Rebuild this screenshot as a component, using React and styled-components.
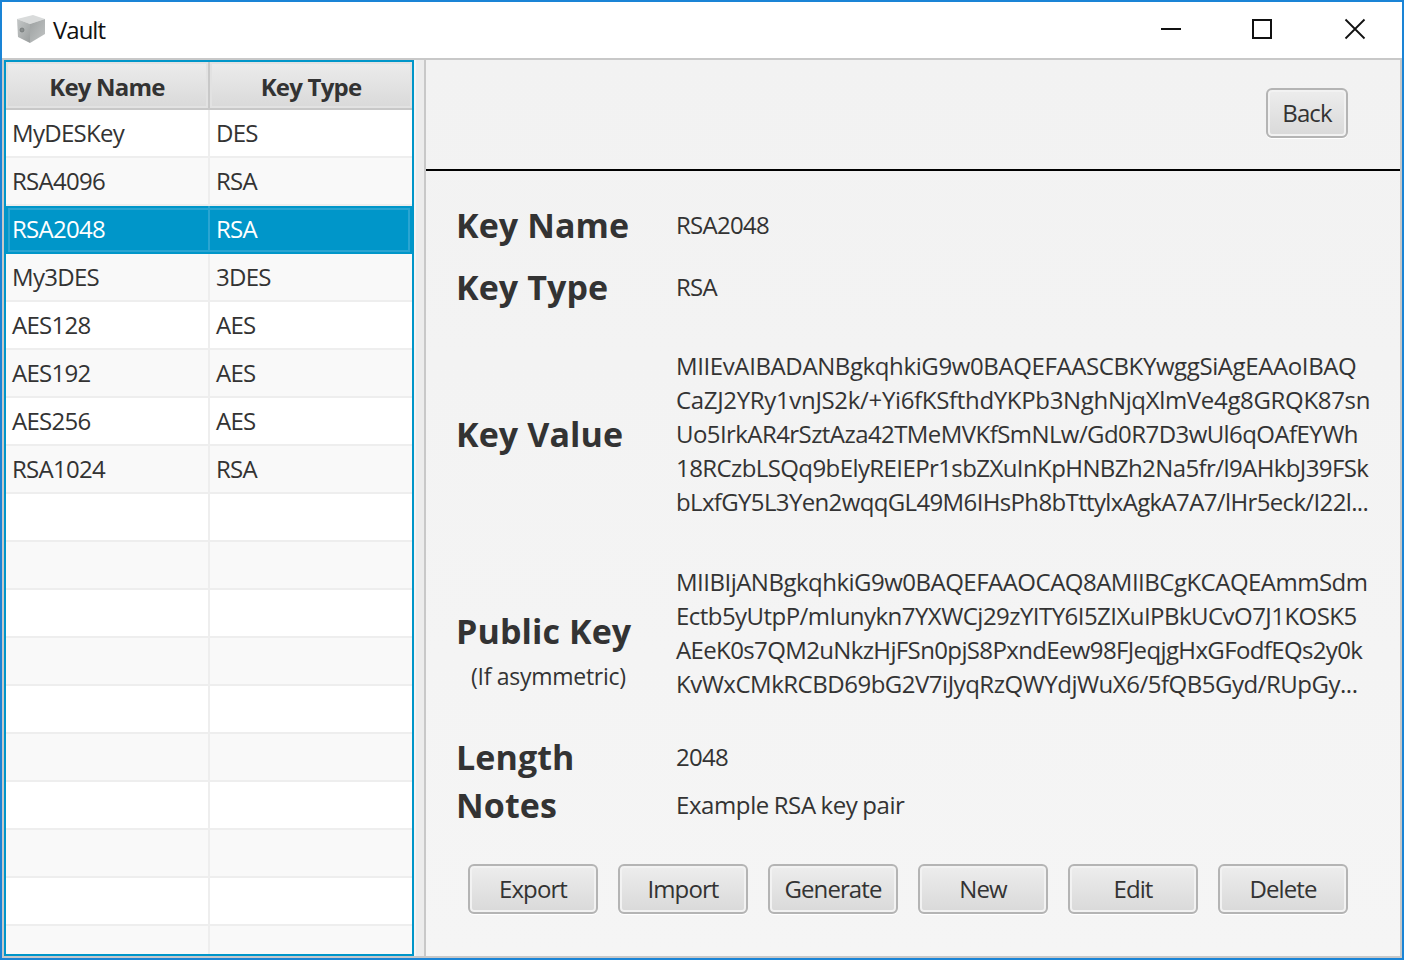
import React from 'react';
import styled, { createGlobalStyle } from 'styled-components';

const GlobalStyle = createGlobalStyle`
  html, body { margin: 0; padding: 0; background: #ffffff; }
  * { box-sizing: border-box; }
  body { font-family: 'Open Sans', 'Noto Sans', 'Liberation Sans', sans-serif; color: #333333; }
`;

const Window = styled.div`
  width: 1404px;
  height: 960px;
  display: flex;
  flex-direction: column;
  border: 2px solid #1a84d6;
  overflow: hidden;
`;

const TitleBar = styled.div`
  height: 56px;
  flex: none;
  display: flex;
  align-items: center;
  background: #ffffff;
  padding-left: 14px;
`;

const AppTitle = styled.span`
  margin-left: 7px;
  font-size: 24px;
  letter-spacing: -1px;
  color: #111111;
  padding-bottom: 1px;
`;

const WindowControls = styled.div`
  margin-left: auto;
  display: flex;
  height: 100%;
`;

const ControlButton = styled.div`
  width: ${(p) => p.$width}px;
  height: 100%;
  display: flex;
  align-items: center;
  justify-content: center;
  padding-bottom: 2px;
`;

const Body = styled.div`
  flex: 1;
  min-height: 0;
  display: flex;
  border: 2px solid #c8c8c8;
  background: #f4f4f4;
`;

const TablePane = styled.div`
  width: 410px;
  flex: none;
  border: 2px solid #0096c9;
  background: #ffffff;
  overflow: hidden;
`;

const HeaderRow = styled.div`
  height: 48px;
  display: grid;
  grid-template-columns: 204px 1fr;
  background: #c8c8c8;
  padding-bottom: 2px;
`;

const HeaderCell = styled.div`
  display: flex;
  align-items: center;
  justify-content: center;
  padding-top: 2px;
  font-size: 24px;
  font-weight: 700;
  letter-spacing: -0.8px;
  color: #333333;
  background: linear-gradient(180deg, #ececec, #d9d9d9);
  margin-right: ${(p) => (p.$divider ? '2px' : '0')};
  box-shadow: inset 0 0 0 2px #e2e2e2;
`;

const Row = styled.div`
  height: 48px;
  display: grid;
  grid-template-columns: 204px 1fr;
  background: ${(p) => (p.$selected ? '#0096c9' : p.$odd ? '#f9f9f9' : '#ffffff')};
  color: ${(p) => (p.$selected ? '#ffffff' : '#333333')};
  border-bottom: 2px solid ${(p) => (p.$selected ? '#0096c9' : '#eeeeee')};
  position: relative;

  ${(p) => p.$selected && `
    &::after {
      content: '';
      position: absolute;
      inset: 2px 2px 0;
      border: 2px solid #2aa5d2;
      pointer-events: none;
    }
  `}
`;

const Cell = styled.div`
  display: flex;
  align-items: center;
  padding: 0 0 2px 6px;
  font-size: 24px;
  letter-spacing: -0.7px;
  border-right: ${(p) => (p.$divider ? `2px solid ${p.$selected ? '#2aa5d2' : '#eeeeee'}` : '0')};
  white-space: nowrap;
  overflow: hidden;
`;

const Splitter = styled.div`
  width: 12px;
  flex: none;
  background: #ececec;
  border-left: 2px solid #f4f4f4;
  border-right: 2px solid #c8c8c8;
`;

const DetailPane = styled.div`
  flex: 1;
  min-width: 0;
  display: flex;
  flex-direction: column;
  background: linear-gradient(180deg, #f2f2f2, #f5f5f5);
`;

const TopBar = styled.div`
  height: 111px;
  flex: none;
  display: flex;
  justify-content: flex-end;
  padding: 28px 52px 0 0;
  border-bottom: 2px solid #000000;
`;

const Details = styled.div`
  padding: 24px 0 0 30px;
  display: flex;
  flex-direction: column;
`;

const Field = styled.div`
  display: grid;
  grid-template-columns: 220px 1fr;
  align-items: center;
  height: ${(p) => p.$height}px;
  margin-top: ${(p) => p.$gap || 0}px;
  padding-bottom: 2px;
`;

const LabelBlock = styled.div`
  display: flex;
  flex-direction: column;
  padding-top: 34px;
`;

const Label = styled.div`
  font-size: 34px;
  font-weight: 700;
  letter-spacing: 0.1px;
  line-height: 44px;
  color: #333333;
`;

const SubLabel = styled.div`
  font-size: 23px;
  letter-spacing: -0.28px;
  line-height: 30px;
  margin-top: 8px;
  padding-left: 15px;
  color: #333333;
`;

const Value = styled.div`
  font-size: 24px;
  letter-spacing: -0.7px;
  line-height: 34px;
  color: #333333;
  white-space: nowrap;
`;

const KeyLine = styled.div`
  letter-spacing: ${(p) => p.$track}px;
`;

const NoteText = styled(Value)`
  letter-spacing: -0.4px;
  word-spacing: -1px;
`;

const ButtonRow = styled.div`
  display: flex;
  gap: 20px;
  margin: 34px 0 0 42px;
`;

const Button = styled.button`
  width: ${(p) => p.$width || 130}px;
  height: 50px;
  padding: 0 0 2px;
  font-family: inherit;
  font-size: 24px;
  letter-spacing: -0.9px;
  color: #333333;
  background: linear-gradient(180deg, #ededed, #d9d9d9);
  border: 2px solid #b4b4b4;
  border-radius: 6px;
  box-shadow: inset 0 0 0 2px #f2f2f2, 0 1px 0 #ffffff;
`;

const VaultIcon = () => (
  <svg width="30" height="30" viewBox="0 0 30 30">
    <defs>
      <linearGradient id="vaultFront" x1="0" y1="0" x2="1" y2="1">
        <stop offset="0" stopColor="#c4c7c7" />
        <stop offset="1" stopColor="#9a9e9e" />
      </linearGradient>
      <linearGradient id="vaultSide" x1="0" y1="0" x2="1" y2="1">
        <stop offset="0" stopColor="#9da1a1" />
        <stop offset="1" stopColor="#c2c5c5" />
      </linearGradient>
    </defs>
    <path d="M1 4 L17 0 L29 4 L14 9 Z" fill="#d9dbdb" />
    <path d="M1 4 L14 9 L14 28 L2 22 Z" fill="url(#vaultFront)" />
    <path d="M14 9 L29 4 L29 19 L14 28 Z" fill="url(#vaultSide)" />
    <circle cx="6" cy="15" r="2" fill="#8a8e8e" stroke="#6f7373" strokeWidth="0.7" />
  </svg>
);

const keys = [
  ['MyDESKey', 'DES'],
  ['RSA4096', 'RSA'],
  ['RSA2048', 'RSA'],
  ['My3DES', '3DES'],
  ['AES128', 'AES'],
  ['AES192', 'AES'],
  ['AES256', 'AES'],
  ['RSA1024', 'RSA'],
  ...Array.from({ length: 10 }, () => ['', '']),
];

// tracking per line so the line ends land where they do in the screenshot
const keyValue = [
  ['MIIEvAIBADANBgkqhkiG9w0BAQEFAASCBKYwggSiAgEAAoIBAQ', -0.39],
  ['CaZJ2YRy1vnJS2k/+Yi6fKSfthdYKPb3NghNjqXlmVe4g8GRQK87sn', -0.33],
  ['Uo5IrkAR4rSztAza42TMeMVKfSmNLw/Gd0R7D3wUl6qOAfEYWh', -0.57],
  ['18RCzbLSQq9bElyREIEPr1sbZXuInKpHNBZh2Na5fr/l9AHkbJ39FSk', -0.59],
  ['bLxfGY5L3Yen2wqqGL49M6IHsPh8bTttylxAgkA7A7/lHr5eck/I22l...', -0.64],
];

const publicKey = [
  ['MIIBIjANBgkqhkiG9w0BAQEFAAOCAQ8AMIIBCgKCAQEAmmSdm', -0.51],
  ['Ectb5yUtpP/mIunykn7YXWCj29zYITY6I5ZIXuIPBkUCvO7J1KOSK5', -0.54],
  ['AEeK0s7QM2uNkzHjFSn0pjS8PxndEew98FJeqjgHxGFodfEQs2y0k', -0.63],
  ['KvWxCMkRCBD69bG2V7iJyqRzQWYdjWuX6/5fQB5Gyd/RUpGy...', -0.49],
];

const actions = ['Export', 'Import', 'Generate', 'New', 'Edit', 'Delete'];

const App = () => (
  <>
    <GlobalStyle />
    <Window>
      <TitleBar>
        <VaultIcon />
        <AppTitle>Vault</AppTitle>
        <WindowControls>
          <ControlButton $width={90}>
            <svg width="22" height="22" viewBox="0 0 22 22">
              <path d="M1 11 H21" stroke="#111" strokeWidth="2" />
            </svg>
          </ControlButton>
          <ControlButton $width={92}>
            <svg width="22" height="22" viewBox="0 0 22 22">
              <rect x="2" y="2" width="18" height="18" fill="none" stroke="#111" strokeWidth="2" />
            </svg>
          </ControlButton>
          <ControlButton $width={94}>
            <svg width="22" height="22" viewBox="0 0 22 22">
              <path d="M1.5 1.5 L20.5 20.5 M20.5 1.5 L1.5 20.5" stroke="#111" strokeWidth="1.8" />
            </svg>
          </ControlButton>
        </WindowControls>
      </TitleBar>

      <Body>
        <TablePane>
          <HeaderRow>
            <HeaderCell $divider>Key Name</HeaderCell>
            <HeaderCell>Key Type</HeaderCell>
          </HeaderRow>
          {keys.map(([name, type], i) => (
            <Row key={i} $odd={i % 2 === 1} $selected={i === 2}>
              <Cell $divider $selected={i === 2}>{name}</Cell>
              <Cell>{type}</Cell>
            </Row>
          ))}
        </TablePane>

        <Splitter />

        <DetailPane>
          <TopBar>
            <Button $width={82}>Back</Button>
          </TopBar>
          <Details>
            <Field $height={62}>
              <Label>Key Name</Label>
              <Value>RSA2048</Value>
            </Field>
            <Field $height={62}>
              <Label>Key Type</Label>
              <Value>RSA</Value>
            </Field>
            <Field $height={170} $gap={30}>
              <Label>Key Value</Label>
              <Value>
                {keyValue.map(([line, track]) => <KeyLine key={line} $track={track}>{line}</KeyLine>)}
              </Value>
            </Field>
            <Field $height={136} $gap={46}>
              <LabelBlock>
                <Label>Public Key</Label>
                <SubLabel>(If asymmetric)</SubLabel>
              </LabelBlock>
              <Value>
                {publicKey.map(([line, track]) => <KeyLine key={line} $track={track}>{line}</KeyLine>)}
              </Value>
            </Field>
            <Field $height={48} $gap={33}>
              <Label>Length</Label>
              <Value>2048</Value>
            </Field>
            <Field $height={48}>
              <Label>Notes</Label>
              <NoteText>Example RSA key pair</NoteText>
            </Field>
          </Details>
          <ButtonRow>
            {actions.map((label) => <Button key={label}>{label}</Button>)}
          </ButtonRow>
        </DetailPane>
      </Body>
    </Window>
  </>
);

export default App;
